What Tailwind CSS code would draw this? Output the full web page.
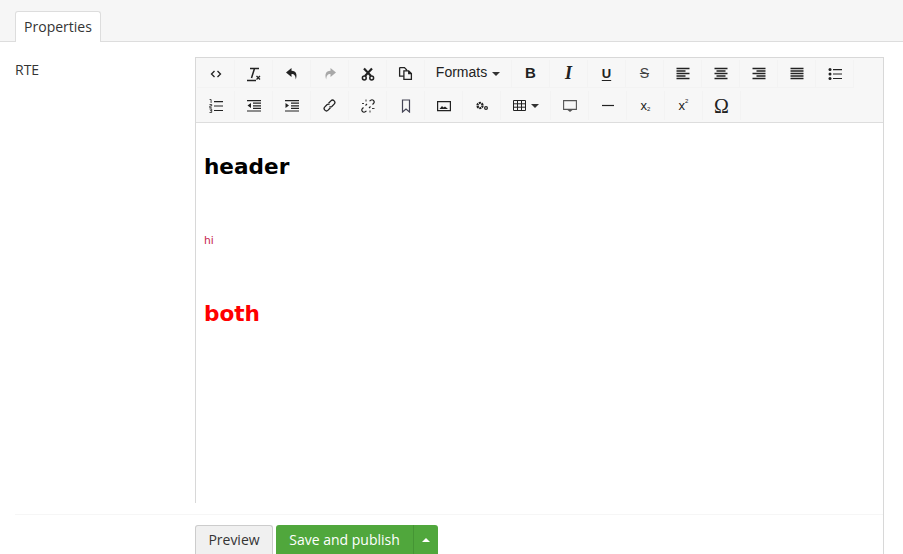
<!DOCTYPE html>
<html lang="en">
  <head>
    <meta charset="UTF-8" />
    <title>Properties</title>
    <script src="https://cdn.jsdelivr.net/npm/@tailwindcss/browser@4"></script>
  </head>
  <body class="relative h-[554px] w-[903px] overflow-hidden bg-white font-['Open_Sans',sans-serif] text-[#343434]">
    <!-- tabs -->
    <div class="flex h-[42px] items-end border-b border-[#ddd] bg-[#f6f6f6] pl-[15px]">
      <div class="-mb-px flex h-[31px] w-[86px] items-center justify-center rounded-t-[3px] border border-b-0 border-[#ddd] bg-white pb-px text-[14px]">Properties</div>
    </div>

    <div class="flex pl-[15px] pt-[15px]">
      <div class="w-[180px] pt-[3px] text-[14px] leading-[20px]">RTE</div>

      <!-- editor -->
      <div class="h-[520px] w-[689px] border border-[#d8d8d8] bg-white">
        <div class="flex h-[65px] flex-wrap content-start gap-y-[3px] border-b border-[#ddd] bg-[#f7f7f7] pl-px pt-[2px] text-[#222]">
          <!-- row 1 -->
          <div class="flex h-[28px] w-[38px] items-center justify-center border-r border-b border-[#f3f3f3]">
            <svg class="h-[14px] w-[14px]" viewBox="0 0 14 14" fill="none" stroke="currentColor" stroke-width="1.300"><path d="M5.500 4 2.500 7l3 3M8.500 4l3 3-3 3" /></svg>
          </div>
          <div class="flex h-[28px] w-[38px] items-center justify-center border-r border-b border-[#f3f3f3]">
            <svg class="h-[16px] w-[16px]" viewBox="0 0 16 16" fill="none" stroke="currentColor" stroke-width="1.500"><path d="M4 2.500h9M8.500 2.500 5.500 12M1 14.500h9" /><path d="m10.500 10 3.500 3.500m0-3.500-3.500 3.500" stroke-width="1.300" /></svg>
          </div>
          <div class="flex h-[28px] w-[38px] items-center justify-center border-r border-b border-[#f3f3f3]">
            <svg class="h-[14px] w-[14px]" viewBox="0 0 14 14" fill="currentColor"><path d="M6.500 1 1 5.500 6.500 10V7c2.600 0 4 1.200 4.300 5.500C12.400 8 11.500 3.800 6.500 3.800z" /></svg>
          </div>
          <div class="flex h-[28px] w-[38px] items-center justify-center border-r border-b border-[#f3f3f3]">
            <svg class="h-[14px] w-[14px] text-[#a8a8a8]" viewBox="0 0 14 14" fill="currentColor"><path d="M7.500 1 13 5.500 7.500 10V7c-2.600 0-4 1.200-4.300 5.500C1.600 8 2.500 3.800 7.500 3.800z" /></svg>
          </div>
          <div class="flex h-[28px] w-[38px] items-center justify-center border-r border-b border-[#f3f3f3]">
            <svg class="h-[14px] w-[14px]" viewBox="0 0 14 14" fill="none" stroke="currentColor" stroke-width="2.200"><path d="M3 1.500 10 9M11 1.500 4 9" /><circle cx="3.300" cy="11" r="1.900" stroke-width="1.500" /><circle cx="10.700" cy="11" r="1.900" stroke-width="1.500" /></svg>
          </div>
          <div class="flex h-[28px] w-[38px] items-center justify-center border-r border-b border-[#f3f3f3]">
            <svg class="h-[15px] w-[15px]" viewBox="0 0 14 14" fill="none" stroke="currentColor" stroke-width="1.200"><path d="M1.500 1.500H6l2 2v1M1.500 1.500v8h4" /><path d="M5.500 4.500H10l2.500 2.500v5.500h-7zM10 4.500V7h2.500" /></svg>
          </div>
          <div class="flex h-[28px] w-[87px] items-center justify-center gap-[5px] border-r border-b border-[#f3f3f3] pb-[3px] font-['Liberation_Sans',sans-serif] text-[14px]">
            Formats
            <span class="mt-[3px] h-0 w-0 border-x-[4px] border-t-[4px] border-x-transparent border-t-[#333]"></span>
          </div>
          <div class="flex h-[28px] w-[38px] items-center justify-center border-r border-b border-[#f3f3f3] font-['Liberation_Sans',sans-serif] text-[15px] font-bold">B</div>
          <div class="flex h-[28px] w-[38px] items-center justify-center border-r border-b border-[#f3f3f3] font-['Liberation_Serif',serif] text-[18px] font-bold italic">I</div>
          <div class="flex h-[28px] w-[38px] items-center justify-center border-r border-b border-[#f3f3f3] font-['Liberation_Sans',sans-serif] text-[13px] font-semibold underline underline-offset-2">U</div>
          <div class="flex h-[28px] w-[38px] items-center justify-center border-r border-b border-[#f3f3f3] font-['Liberation_Sans',sans-serif] text-[14px] text-[#444] line-through">S</div>
          <div class="flex h-[28px] w-[38px] items-center justify-center border-r border-b border-[#f3f3f3]">
            <svg class="h-[14px] w-[14px]" viewBox="0 0 14 14" fill="none" stroke="currentColor" stroke-width="1.300"><path d="M0.500 1.500h13M0.500 4h9M0.500 6.500h13M0.500 9h9M0.500 11.500h13" /></svg>
          </div>
          <div class="flex h-[28px] w-[38px] items-center justify-center border-r border-b border-[#f3f3f3]">
            <svg class="h-[14px] w-[14px]" viewBox="0 0 14 14" fill="none" stroke="currentColor" stroke-width="1.300"><path d="M0.500 1.500h13M2.500 4h9M0.500 6.500h13M2.500 9h9M0.500 11.500h13" /></svg>
          </div>
          <div class="flex h-[28px] w-[38px] items-center justify-center border-r border-b border-[#f3f3f3]">
            <svg class="h-[14px] w-[14px]" viewBox="0 0 14 14" fill="none" stroke="currentColor" stroke-width="1.300"><path d="M0.500 1.500h13M4.500 4h9M0.500 6.500h13M4.500 9h9M0.500 11.500h13" /></svg>
          </div>
          <div class="flex h-[28px] w-[38px] items-center justify-center border-r border-b border-[#f3f3f3]">
            <svg class="h-[14px] w-[14px]" viewBox="0 0 14 14" fill="none" stroke="currentColor" stroke-width="1.400"><path d="M0.500 1.500h13M0.500 4h13M0.500 6.500h13M0.500 9h13M0.500 11.500h13" /></svg>
          </div>
          <div class="flex h-[28px] w-[38px] items-center justify-center border-r border-b border-[#f3f3f3]">
            <svg class="h-[14px] w-[14px]" viewBox="0 0 14 14" fill="currentColor"><circle cx="2" cy="2.500" r="1.500" /><circle cx="2" cy="7" r="1.500" /><circle cx="2" cy="11.500" r="1.500" /><path d="M5 2h9v1.200H5zM5 6.400h9v1.200H5zM5 10.900h9v1.200H5z" /></svg>
          </div>

          <!-- row 2 -->
          <div class="flex h-[29px] w-[38px] items-center justify-center border-r border-[#f3f3f3]">
            <svg class="h-[14px] w-[14px]" viewBox="0 0 14 14" fill="currentColor"><path d="M5 2h9v1.200H5zM5 6.400h9v1.200H5zM5 10.900h9v1.200H5z" /><path d="M0.600 0.500h1.500v3.500M0.500 5.500h2.200v1.500H0.800v1.800h2M0.500 10h2.200v3.500H0.500M1 11.700h1.700" fill="none" stroke="currentColor" stroke-width="0.800" /></svg>
          </div>
          <div class="flex h-[29px] w-[38px] items-center justify-center border-r border-[#f3f3f3]">
            <svg class="h-[14px] w-[14px]" viewBox="0 0 14 14" fill="currentColor"><path d="M0 1h14v1.200H0zM6 3.600h8v1.200H6zM6 6.200h8v1.200H6zM6 8.800h8V10H6zM0 11.400h14v1.200H0zM4 4v5L0.500 6.500z" /></svg>
          </div>
          <div class="flex h-[29px] w-[38px] items-center justify-center border-r border-[#f3f3f3]">
            <svg class="h-[14px] w-[14px]" viewBox="0 0 14 14" fill="currentColor"><path d="M0 1h14v1.200H0zM6 3.600h8v1.200H6zM6 6.200h8v1.200H6zM6 8.800h8V10H6zM0 11.400h14v1.200H0zM0.500 4v5L4 6.500z" /></svg>
          </div>
          <div class="flex h-[29px] w-[38px] items-center justify-center border-r border-[#f3f3f3]">
            <svg class="h-[13px] w-[13px]" viewBox="0 0 14 14" fill="none" stroke="currentColor" stroke-width="1.400"><path d="M6 4.500 8.500 2a2 2 0 0 1 3.500 3.500L9.500 8a2 2 0 0 1-2.500 0" /><path d="M8 9.500 5.500 12A2 2 0 0 1 2 8.500L4.500 6A2 2 0 0 1 7 6" /></svg>
          </div>
          <div class="flex h-[29px] w-[38px] items-center justify-center border-r border-[#f3f3f3]">
            <svg class="h-[14px] w-[14px]" viewBox="0 0 14 14" fill="none" stroke="currentColor" stroke-width="1.100"><path d="M8.500 2 9.500 1.500a2 2 0 0 1 3 3L11.500 5.500M5.500 12l-1 .5a2 2 0 0 1-3-3L2.500 8.500M6 5 4.500 6.500M8 9l1.500-1.500" /><path d="M5 0.500v2M1 4.500h2M9 11.500v2M11 9.500h2.500" stroke-width="0.900" /></svg>
          </div>
          <div class="flex h-[29px] w-[38px] items-center justify-center border-r border-[#f3f3f3]">
            <svg class="h-[14px] w-[14px] text-[#445]" viewBox="0 0 14 14" fill="none" stroke="currentColor" stroke-width="1.200"><path d="M3.500 1v12L7 10l3.500 3V1z" /></svg>
          </div>
          <div class="flex h-[29px] w-[38px] items-center justify-center border-r border-[#f3f3f3]">
            <svg class="h-[14px] w-[14px]" viewBox="0 0 14 14"><path d="M0.600 2.600h12.800v9H0.600z" fill="none" stroke="currentColor" stroke-width="1.200" /><path d="M2.500 10 5 7l1.500 1.500L8 7.500l3 2.500z" fill="currentColor" /></svg>
          </div>
          <div class="flex h-[29px] w-[38px] items-center justify-center border-r border-[#f3f3f3]">
            <svg class="h-[14px] w-[14px]" viewBox="0 0 14 14" fill="none" stroke="currentColor"><circle cx="5" cy="6.500" r="2.600" stroke-width="2.200" stroke-dasharray="2 0.700" /><circle cx="11" cy="9" r="1.400" stroke-width="1.200" /></svg>
          </div>
          <div class="flex h-[29px] w-[50px] items-center justify-center gap-[5px] border-r border-[#f3f3f3]">
            <svg class="h-[13px] w-[13px]" viewBox="0 0 13 13" fill="none" stroke="currentColor"><path d="M0.500 1.500h12v10H0.500zM0.500 4.800h12M0.500 8.200h12M4.500 1.500v10M8.500 1.500v10" /></svg>
            <span class="h-0 w-0 border-x-[4px] border-t-[4px] border-x-transparent border-t-[#333]"></span>
          </div>
          <div class="flex h-[29px] w-[38px] items-center justify-center border-r border-[#f3f3f3]">
            <svg class="h-[14px] w-[14px] text-[#555]" viewBox="0 0 14 14"><path d="M0.600 1.600h12.800v8.800H0.600z" fill="none" stroke="currentColor" stroke-width="1.100" /><path d="M4.500 11h5L7 13z" fill="currentColor" /></svg>
          </div>
          <div class="flex h-[29px] w-[38px] items-center justify-center border-r border-[#f3f3f3]">
            <svg class="h-[14px] w-[14px]" viewBox="0 0 14 14" fill="none" stroke="currentColor" stroke-width="1.200"><path d="M1 6.500h12" /></svg>
          </div>
          <div class="flex h-[29px] w-[38px] items-center justify-center border-r border-[#f3f3f3] font-['Liberation_Sans',sans-serif] text-[13px]">x<span class="mt-[8px] text-[6px]">2</span></div>
          <div class="flex h-[29px] w-[38px] items-center justify-center border-r border-[#f3f3f3] font-['Liberation_Sans',sans-serif] text-[13px]">x<span class="mb-[8px] text-[6px]">2</span></div>
          <div class="flex h-[29px] w-[38px] items-center justify-center border-r border-[#f3f3f3] font-['Liberation_Serif',serif] text-[20px]">Ω</div>
        </div>

        <!-- editor content -->
        <div class="px-2 font-['DejaVu_Sans',sans-serif]">
          <h1 class="pt-[30px] text-[21.6px] leading-[28px] font-bold text-black">header</h1>
          <p class="mt-[53px] text-[10.8px] leading-[14px] text-[#c7254e]">hi</p>
          <h1 class="mt-[52px] text-[21.6px] leading-[28px] font-bold text-[#ff0000]">both</h1>
        </div>
      </div>
    </div>

    <!-- footer floats over the editor -->
    <div class="absolute bottom-0 left-0 h-[51px] w-[883px] bg-white pl-[15px]">
      <div class="mt-[11px] flex h-[40px] items-start border-t border-[#f6f6f6] pt-[10px] pl-[180px] text-[14px]">
        <div class="flex h-[30px] w-[78px] items-center justify-center rounded-t-[3px] border border-b-0 border-[#ccc] bg-[#f0f0f0] pb-[2px]">Preview</div>
        <div class="ml-[3px] flex h-[30px] w-[137px] items-center justify-center rounded-tl-[3px] bg-[#50a73c] pb-[2px] text-white">Save and publish</div>
        <div class="flex h-[30px] w-[25px] items-center justify-center rounded-tr-[3px] border-l border-[#459534] bg-[#50a73c]">
          <span class="h-0 w-0 border-x-[4px] border-b-[4px] border-x-transparent border-b-white"></span>
        </div>
      </div>
    </div>
  </body>
</html>
